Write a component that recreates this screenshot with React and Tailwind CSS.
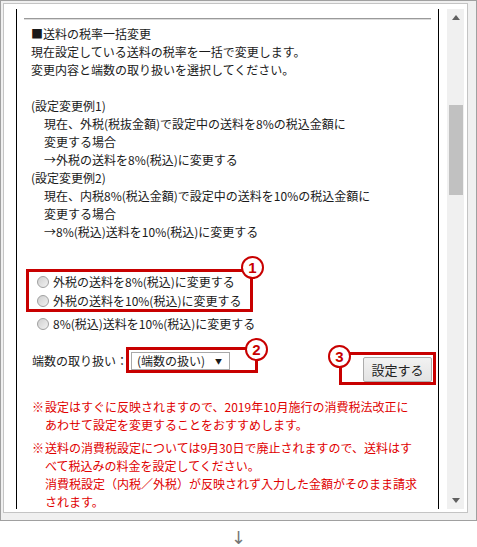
import React from 'react';

const RED = 'border-[#c80000]';

const Badge = ({ n, className }) => (
    <div className={`absolute w-[23px] h-[23px] rounded-full border-2 ${RED} bg-white flex items-center justify-center text-[#c80000] text-[15px] leading-none font-['Liberation_Sans',sans-serif] font-bold ${className}`}>
        {n}
    </div>
);

const Radio = ({ label }) => (
    <div className="flex items-center h-[19px] pl-[20px]">
        <span className="w-[12px] h-[12px] rounded-full border border-[#a0a0a0] bg-linear-to-br from-[#cfcfcf] to-[#f2f2f2] shrink-0" />
        <span className="ml-[4px] whitespace-nowrap">{label}</span>
    </div>
);

const App = () => {
    return (
        <div className="w-[477px] h-[547px] bg-white font-['Noto_Sans_CJK_JP',sans-serif] text-[12px] leading-[18px] text-[#1a1a1a]">
            {/* window frame */}
            <div className="w-[477px] h-[521px] border border-[#a0a0a0] bg-[#f0f0f0] pt-[2px] pl-[2px] pr-[8px] pb-[7px] flex">
                <div className="flex-1 border border-[#c4c4c4] bg-white pt-[5px] pb-[3px] pl-[12px] pr-[3px] flex">
                    {/* scrolled content */}
                    <div className="relative w-[423px] h-[500px] border-l border-r border-black overflow-hidden">
                        <div className="mt-[9px] mx-[7px] border-t border-[#9a9a9a] border-b border-b-[#dcdcdc]" />

                        <div className="mt-[5px] pl-[14px] whitespace-nowrap">
                            <p>■送料の税率一括変更</p>
                            <p>現在設定している送料の税率を一括で変更します。</p>
                            <p>変更内容と端数の取り扱いを選択してください。</p>
                            <p className="h-[18px]" />
                            <p>(設定変更例1)</p>
                            <div className="pl-[13px]">
                                <p>現在、外税(税抜金額)で設定中の送料を8%の税込金額に</p>
                                <p>変更する場合</p>
                                <p>→外税の送料を8%(税込)に変更する</p>
                            </div>
                            <p>(設定変更例2)</p>
                            <div className="pl-[13px]">
                                <p>現在、内税8%(税込金額)で設定中の送料を10%の税込金額に</p>
                                <p>変更する場合</p>
                                <p>→8%(税込)送料を10%(税込)に変更する</p>
                            </div>
                        </div>

                        {/* radios */}
                        <div className="mt-[31px]">
                            <Radio label="外税の送料を8%(税込)に変更する" />
                            <Radio label="外税の送料を10%(税込)に変更する" />
                            <div className="mt-[4px]">
                                <Radio label="8%(税込)送料を10%(税込)に変更する" />
                            </div>
                        </div>

                        {/* rounding + submit */}
                        <div className="mt-[19px] flex justify-between items-start pl-[15px] pr-[6px]">
                            <div className="flex items-center h-[18px]">
                                <span className="w-[99px] whitespace-nowrap">端数の取り扱い：</span>
                                <div className="w-[99px] h-[18px] border border-[#a9a9a9] bg-white flex items-center justify-between pl-[5px] pr-[7px]">
                                    <span className="whitespace-nowrap">(端数の扱い)</span>
                                    <span className="text-[7px] leading-none">▼</span>
                                </div>
                            </div>
                            <button className="mt-[5px] w-[69px] h-[25px] border border-[#acacac] rounded-[2px] bg-linear-to-b from-[#f2f2f2] to-[#e3e3e3] text-[13px] text-[#222] flex items-center justify-center">
                                設定する
                            </button>
                        </div>

                        {/* notes */}
                        <div className="mt-[16px] pl-[15px] text-[#e00000] whitespace-nowrap">
                            <div className="flex">
                                <span className="w-[13px] shrink-0">※</span>
                                <p>
                                    設定はすぐに反映されますので、2019年10月施行の消費税法改正に<br />
                                    あわせて設定を変更することをおすすめします。
                                </p>
                            </div>
                            <div className="flex mt-[5px]">
                                <span className="w-[13px] shrink-0">※</span>
                                <p>
                                    送料の消費税設定については9月30日で廃止されますので、送料はす<br />
                                    べて税込みの料金を設定してください。<br />
                                    消費税設定（内税／外税）が反映されず入力した金額がそのまま請求<br />
                                    されます。
                                </p>
                            </div>
                        </div>

                        {/* annotations */}
                        <div className={`absolute left-[9px] top-[260px] w-[227px] h-[43px] border-[3px] ${RED}`} />
                        <Badge n="1" className="left-[224px] top-[247px]" />
                        <div className={`absolute left-[109px] top-[338px] w-[132px] h-[26px] border-[3px] ${RED}`} />
                        <Badge n="2" className="left-[228px] top-[329px]" />
                        <div className={`absolute left-[322px] top-[343px] w-[97px] h-[33px] border-[3px] ${RED}`} />
                        <Badge n="3" className="left-[311px] top-[336px]" />
                    </div>

                    {/* scrollbar */}
                    <div className="ml-[8px] w-[17px] h-[500px] bg-[#f0f0f0] flex flex-col items-center">
                        <div className="h-[17px] w-full flex items-center justify-center">
                            <svg width="8" height="5" viewBox="0 0 8 5"><path d="M4 0L8 5H0z" fill="#606060" /></svg>
                        </div>
                        <div className="mt-[79px] w-[14px] h-[90px] bg-[#c1c1c1]" />
                        <div className="flex-1" />
                        <div className="h-[17px] w-full flex items-center justify-center">
                            <svg width="8" height="5" viewBox="0 0 8 5"><path d="M0 0H8L4 5z" fill="#606060" /></svg>
                        </div>
                    </div>
                </div>
            </div>

            <div className="mt-[7px] text-center text-[18px] leading-[20px] text-[#777] font-['DejaVu_Sans',sans-serif]">↓</div>
        </div>
    );
};

export default App;
